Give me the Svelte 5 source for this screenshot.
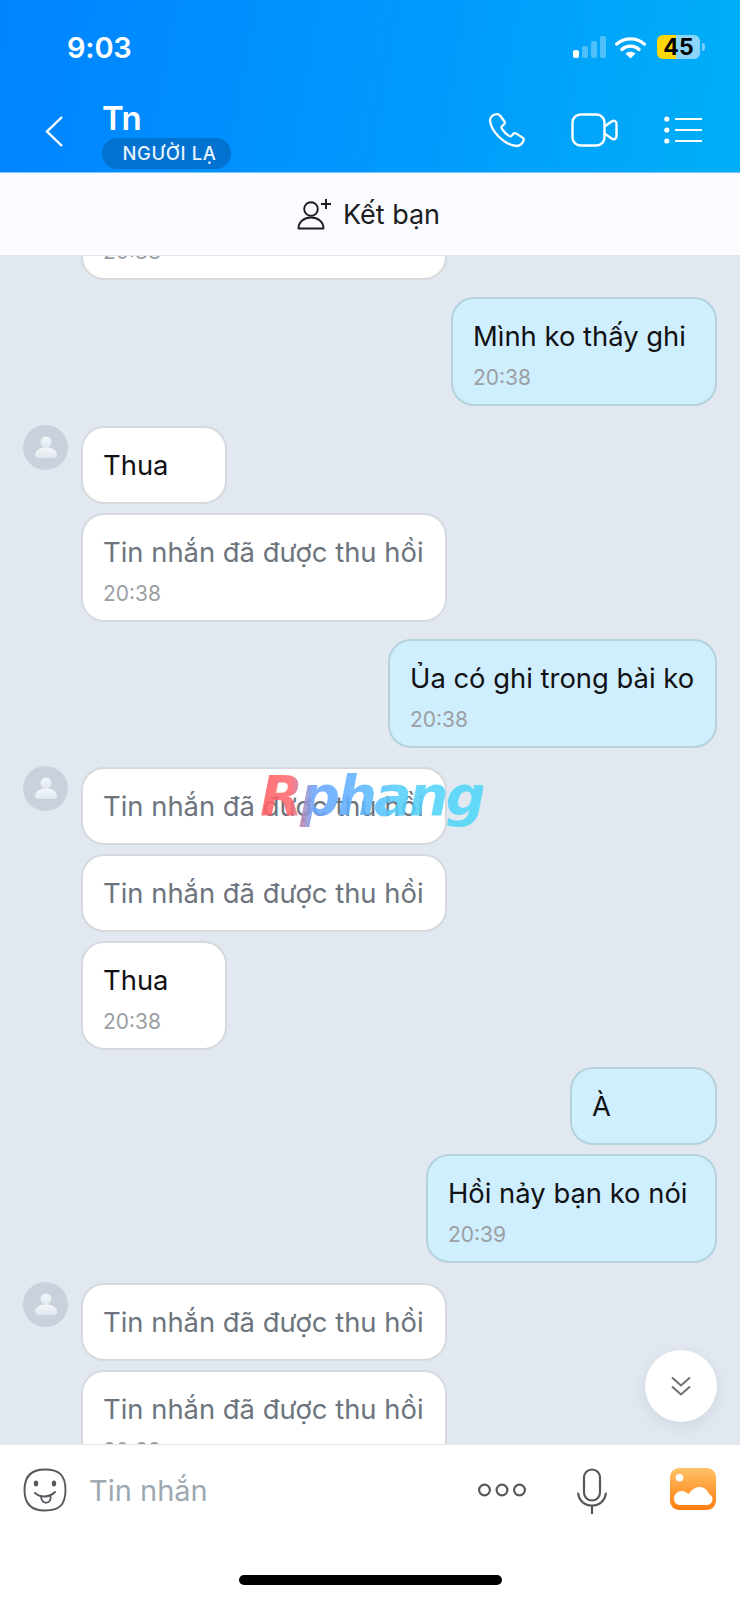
<script>
  const REC = 'Tin nhắn đã được thu hồi';
  const groups = [
    { side: 'left', cut: true, msgs: [{ t: REC, time: '20:38', rec: true, w: 366 }] },
    { side: 'right', msgs: [{ t: 'Mình ko thấy ghi', time: '20:38', w: 266 }] },
    { side: 'left', msgs: [{ t: 'Thua', w: 146 }, { t: REC, time: '20:38', rec: true, w: 366 }], avatar: true },
    { side: 'right', msgs: [{ t: 'Ủa có ghi trong bài ko', time: '20:38', w: 329 }] },
    { side: 'left', msgs: [{ t: REC, rec: true, w: 366 }, { t: REC, rec: true, w: 366 }, { t: 'Thua', time: '20:38', w: 146 }], avatar: true },
    { side: 'right', msgs: [{ t: 'À', w: 147 }, { t: 'Hồi nảy bạn ko nói', time: '20:39', w: 291 }] },
    { side: 'left', msgs: [{ t: REC, rec: true, w: 366 }, { t: REC, time: '20:39', rec: true, w: 366 }], avatar: true }
  ];
</script>

<div class="page">
  <header class="top">
    <div class="status">
      <span class="clock">9:03</span>
      <div class="indicators">
        <div class="signal"><i class="on h1"></i><i class="h2"></i><i class="h3"></i><i class="h4"></i></div>
        <svg class="wifi" viewBox="0 0 32 24" width="31" height="23">
          <path d="M1.500 8.500C9.500 1 22.500 1 30.500 8.500" fill="none" stroke="#fff" stroke-width="3.400" stroke-linecap="round"/>
          <path d="M7 14C12 9.500 20 9.500 25 14" fill="none" stroke="#fff" stroke-width="3.400" stroke-linecap="round"/>
          <path d="M16 23.500l-5.200-5.200c3-2.600 7.400-2.600 10.400 0z" fill="#fff"/>
        </svg>
        <div class="battery"><span>45</span></div>
        <i class="nub"></i>
      </div>
    </div>
    <div class="nav">
      <svg class="back" viewBox="0 0 20 32" width="20" height="32">
        <path d="M18 2L3 16.500L18 31" fill="none" stroke="#fff" stroke-width="2.400"/>
      </svg>
      <div class="title">
        <div class="name">Tn</div>
        <div class="badge">NGƯỜI LẠ</div>
      </div>
      <div class="actions">
        <svg class="phone" viewBox="0 0 38 36" width="38" height="36">
          <path d="M8 2.200C5.500 2.600 2 5 2 8c.3 6.300 4 12 9 17 5 4.800 10.800 8.500 17.500 9 3.200 0 5.800-2.600 7-5.200.6-1.300.2-2.400-.9-3.200l-6.200-4c-1.100-.7-2.200-.6-3.100.3l-1.700 1.800c-.8.8-1.800.8-2.700.2-2.300-1.500-5.300-4.500-7.100-7.300-.6-1-.4-1.900.4-2.600l1.700-1.500c.9-.8 1.100-1.900.6-3L12.200 3.800C11.300 2.400 9.600 1.900 8 2.200z" fill="none" stroke="#fff" stroke-width="2.300" stroke-linejoin="round"/>
        </svg>
        <svg class="video" viewBox="0 0 47 34" width="47" height="34">
          <rect x="1.500" y="1.500" width="32" height="31" rx="8" fill="none" stroke="#fff" stroke-width="2.400"/>
          <path d="M33.500 13.500L41 8.300c2-1.300 4.500 0 4.500 2.400v12.600c0 2.400-2.500 3.700-4.500 2.400L33.500 20.500" fill="none" stroke="#fff" stroke-width="2.400" stroke-linejoin="round"/>
        </svg>
        <svg class="menu" viewBox="0 0 38 28" width="38" height="28">
          <circle cx="2.800" cy="3" r="2.600" fill="#fff"/><circle cx="2.800" cy="14" r="2.600" fill="#fff"/><circle cx="2.800" cy="25" r="2.600" fill="#fff"/>
          <path d="M11 3h27M11 14h27M11 25h27" stroke="#fff" stroke-width="2"/>
        </svg>
      </div>
    </div>
  </header>

  <div class="addbar">
    <svg viewBox="0 0 36 32" width="36" height="32">
      <circle cx="14" cy="11" r="6.800" fill="none" stroke="#1d1d1f" stroke-width="1.900"/>
      <path d="M1.500 30.500c0-6.500 5.500-11 12.500-11s12.500 4.500 12.500 11z" fill="none" stroke="#1d1d1f" stroke-width="1.900" stroke-linejoin="round"/>
      <path d="M29 1v10M24 6h10" stroke="#1d1d1f" stroke-width="1.900"/>
    </svg>
    <span>Kết bạn</span>
  </div>

  <main class="chat">
    {#each groups as g}
      <section class="group {g.side}" class:cut={g.cut}>
        {#if g.side === 'left'}
          <div class="avatar" class:blank={!g.avatar}>
            {#if g.avatar}
              <svg viewBox="0 0 45 45" width="45" height="45">
                <defs>
                  <linearGradient id="pg" x1="0" y1="0" x2="0" y2="1">
                    <stop offset="0" stop-color="#f4f7fa"/><stop offset="1" stop-color="#dfe8ee"/>
                  </linearGradient>
                </defs>
                <circle cx="23" cy="17" r="5.500" fill="url(#pg)"/>
                <path d="M12 30c0-5 5-7.500 11-7.500S34 25 34 30c0 2-1.500 3-3.500 3h-15C13.500 33 12 32 12 30z" fill="url(#pg)"/>
              </svg>
            {/if}
          </div>
        {/if}
        <div class="stack">
          {#each g.msgs as m}
            <div class="bubble" class:mine={g.side === 'right'} class:rec={m.rec} style:width={m.w + 'px'}>
              <div class="text">{m.t}</div>
              {#if m.time}<div class="time">{m.time}</div>{/if}
            </div>
          {/each}
        </div>
      </section>
    {/each}

    <button class="scroll" aria-label="Xuống cuối">
      <svg viewBox="0 0 22 22" width="22" height="22">
        <path d="M2 2.500l9 8 9-8M2 11.500l9 8 9-8" fill="none" stroke="#6c7176" stroke-width="2"/>
      </svg>
    </button>
    <div class="mark">Rphang</div>
  </main>

  <footer class="composer">
    <div class="inputrow">
      <svg class="smile" viewBox="0 0 44 44" width="44" height="44">
        <path d="M22 1.500c14 0 20.500 5.500 20.500 20.500S36 42.500 22 42.500 1.500 36 1.500 22 8 1.500 22 1.500z" fill="none" stroke="#55595d" stroke-width="1.900"/>
        <ellipse cx="13" cy="15.500" rx="2.200" ry="3" fill="#55595d"/><ellipse cx="31" cy="15.500" rx="2.200" ry="3" fill="#55595d"/>
        <path d="M12 25c5 4.500 14 5 20-1" fill="none" stroke="#55595d" stroke-width="2" stroke-linecap="round"/>
        <path d="M18 28.500c0 4 2.500 6.500 5.500 6.200 3-.3 4.500-3 4-6.700" fill="none" stroke="#55595d" stroke-width="1.800"/>
      </svg>
      <span class="ph">Tin nhắn</span>
      <svg class="more" viewBox="0 0 50 16" width="50" height="16">
        <circle cx="7.500" cy="8" r="5.400" fill="none" stroke="#55595d" stroke-width="2.200"/>
        <circle cx="25" cy="8" r="5.400" fill="none" stroke="#55595d" stroke-width="2.200"/>
        <circle cx="42.500" cy="8" r="5.400" fill="none" stroke="#55595d" stroke-width="2.200"/>
      </svg>
      <svg class="mic" viewBox="0 0 30 46" width="30" height="46">
        <rect x="7" y="1.500" width="16" height="31" rx="8" fill="none" stroke="#55595d" stroke-width="2.200"/>
        <path d="M1.200 25.500c1 7.500 6.500 12 13.800 12s12.800-4.500 13.800-12M15 37.500V46" fill="none" stroke="#55595d" stroke-width="2.200" stroke-linecap="round"/>
      </svg>
      <svg class="pic" viewBox="0 0 46 42" width="46" height="42">
        <defs>
          <linearGradient id="og" x1="0" y1="0" x2="0" y2="1">
            <stop offset="0" stop-color="#ffc166"/><stop offset="1" stop-color="#ff7d0d"/>
          </linearGradient>
        </defs>
        <rect width="46" height="42" rx="9" fill="url(#og)"/>
        <circle cx="9.500" cy="9.800" r="3.800" fill="#fff"/>
        <path d="M4 31c0-4.500 3.500-8 7.500-8 3 0 5 1.500 7 3 2.500-3.500 6.500-7 11-7 5 0 8 3.500 10 7.500 2 .8 3 2.500 3 4.500 0 3-2 6-6 6H10c-4 0-6-3-6-6z" fill="#fff"/>
      </svg>
    </div>
    <div class="home"></div>
  </footer>
</div>

<style>
  :global(body) { margin: 0; }
  .page {
    width: 740px;
    height: 1600px;
    display: flex;
    flex-direction: column;
    overflow: hidden;
    font-family: Inter, "Liberation Sans", sans-serif;
    background: #e1e8f0;
  }
  .top {
    height: 173px;
    box-sizing: border-box;
    flex: none;
    background: linear-gradient(100deg, #0083ff 0%, #0097fe 50%, #00aff6 100%);
    border-bottom: 1px solid #7cc8fb;
    color: #fff;
  }
  .status {
    height: 94px;
    display: flex;
    align-items: center;
    padding: 0 35px 0 67px;
    box-sizing: border-box;
  }
  .clock { font-size: 29px; font-weight: 600; letter-spacing: -0.2px; }
  .indicators { margin-left: auto; display: flex; align-items: center; }
  .signal { display: flex; align-items: flex-end; gap: 3px; height: 22px; margin-right: 9px; margin-left: 2px; }
  .signal i { width: 6px; border-radius: 2px; background: rgba(255,255,255,.3); }
  .signal .on { background: #fff; }
  .h1 { height: 8px; } .h2 { height: 12px; } .h3 { height: 17px; } .h4 { height: 22px; }
  .wifi { margin-right: 11px; }
  .battery {
    width: 43px;
    height: 24px;
    border-radius: 6px;
    background: linear-gradient(90deg, #ffd60a 45%, #8bd5fd 45%);
    color: #000;
    font-size: 23px;
    font-weight: 700;
    line-height: 24px;
    text-align: center;
  }
  .nub { width: 3px; height: 8px; margin-left: 2px; border-radius: 0 3px 3px 0; background: #7fcdfb; }
  .nav { height: 78px; display: flex; align-items: flex-start; padding-left: 44px; padding-right: 38px; }
  .back { margin-top: 21px; margin-right: 40px; }
  .title { margin-left: -2px; display: flex; flex-direction: column; align-items: flex-start; }
  .name { font-size: 33px; font-weight: 600; line-height: 40px; margin-top: 4px; letter-spacing: -0.5px; }
  .badge {
    height: 31px;
    line-height: 31px;
    width: 129px;
    box-sizing: border-box;
    text-align: center;
    border-radius: 16px;
    background: #0172cf;
    font-size: 18.500px;
    font-weight: 500;
    letter-spacing: 0.6px;
    padding-left: 6px;
    color: #e8f4ff;
  }
  .actions { margin-left: auto; display: flex; align-items: center; height: 72px; }
  .phone { margin-right: 45px; }
  .video { margin-right: 46px; }
  .addbar {
    height: 83px;
    flex: none;
    box-sizing: border-box;
    background: #f9fbff;
    border-bottom: 1px solid #e4e6ea;
    display: flex;
    align-items: center;
    justify-content: center;
    gap: 10px;
    font-size: 27px;
    color: #1d1d1f;
    padding-right: 3px;
    position: relative;
    z-index: 1;
  }
  .chat {
    flex: 1;
    min-height: 0;
    position: relative;
    overflow: hidden;
    display: flex;
    flex-direction: column;
    background: #e1e8f0;
  }
  .group { display: flex; flex: none; }
  .group.cut { margin-top: -85px; }
  .group.left { padding-left: 23px; margin-bottom: 17px; }
  .group.right { justify-content: flex-end; padding-right: 23px; margin-bottom: 19.500px; }
  .avatar {
    width: 45px;
    height: 45px;
    border-radius: 50%;
    background: #c8d1dc;
    margin-right: 13px;
    flex: none;
    margin-top: -1px;
  }
  .avatar.blank { background: none; }
  .avatar svg { display: block; }
  .stack { display: flex; flex-direction: column; gap: 9px; }
  .right .stack { align-items: flex-end; }
  .left .stack { align-items: flex-start; }
  .bubble {
    box-sizing: border-box;
    padding: 18px 20px;
    border-radius: 23px;
    border: 2px solid #d6dade;
    background: #fff;
    color: #111113;
    font-size: 27.400px;
    white-space: nowrap;
  }
  .bubble.mine { background: #cfeefe; border-color: #b5d2dc; }
  .text { line-height: 38px; }
  .rec .text { color: #6d747d; }
  .time { font-size: 21px; line-height: 16px; margin-top: 15px; color: #9c9fa3; }
  .scroll {
    position: absolute;
    right: 23px;
    top: 1094px;
    width: 72px;
    height: 72px;
    border: 0;
    padding: 0;
    border-radius: 50%;
    background: #fff;
    box-shadow: 0 4px 14px rgba(120,135,160,.18);
    display: flex;
    align-items: center;
    justify-content: center;
  }
  .mark {
    position: absolute;
    left: 260px;
    top: 505px;
    font-family: "DejaVu Sans", sans-serif;
    font-size: 56px;
    line-height: 70px;
    font-weight: 700;
    font-style: italic;
    letter-spacing: -3px;
    background: linear-gradient(90deg, #ff5f63 0%, #ff6a70 14%, #6aa6ff 24%, #5fb4ff 45%, #57d0fb 62%, #50d8f8 100%);
    -webkit-background-clip: text;
    background-clip: text;
    color: transparent;
    opacity: .88;
    filter: blur(.5px);
  }
  .composer {
    height: 156px;
    flex: none;
    box-sizing: border-box;
    background: #fff;
    border-top: 1px solid #e3e5e8;
    position: relative;
    z-index: 1;
  }
  .inputrow { display: flex; align-items: center; height: 89px; padding-left: 23px; }
  .ph { font-size: 29px; color: #9ea8b0; margin-left: 22px; margin-top: 1px; }
  .more { margin-left: auto; margin-right: 50px; }
  .mic { margin-right: 63px; margin-top: 2px; }
  .pic { margin-right: 24px; margin-top: -2px; }
  .home { width: 263px; height: 10px; border-radius: 5px; background: #000; margin: 41px auto 0; }
</style>
